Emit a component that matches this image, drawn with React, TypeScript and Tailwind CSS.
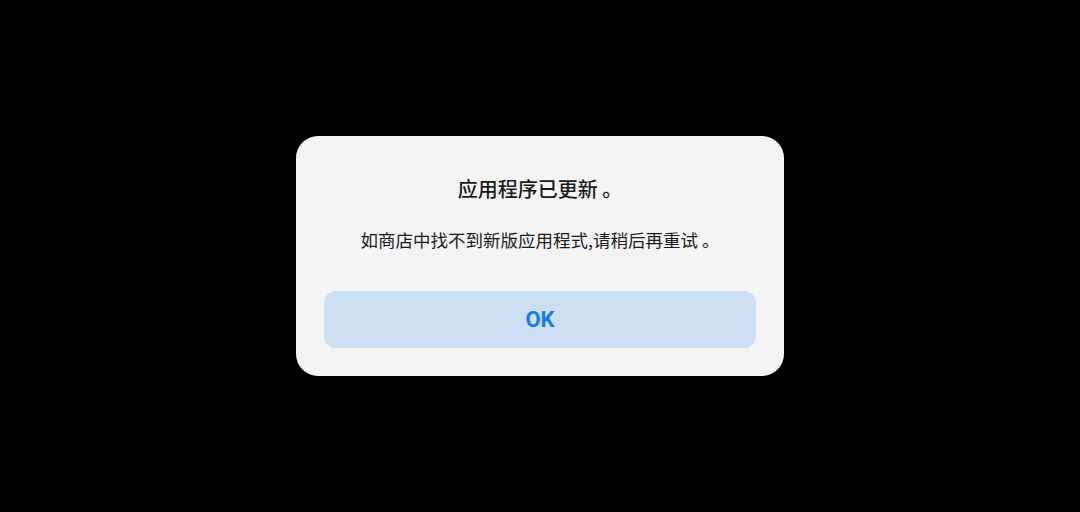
import React from 'react';

const App: React.FC = () => {
    return (
        <div
            className="w-[1080px] h-[512px] bg-black flex items-center justify-center"
            style={{ fontFamily: '"Noto Sans CJK SC", "Noto Sans", sans-serif' }}
        >
            <div className="w-[488px] h-[240px] bg-[#f4f4f4] rounded-[22px] flex flex-col items-center px-7 pt-[39px]">
                <h1 className="text-[20px] leading-[28px] font-medium text-[#1b1b1b]">应用程序已更新 。</h1>
                <p className="mt-[24px] text-[17.5px] leading-[26px] text-[#1b1b1b]">如商店中找不到新版应用程式,请稍后再重试 。</p>
                <button className="mt-[38px] w-full h-[57px] rounded-[12px] bg-[#cde0f3] text-[#1a7be6] text-[22px] font-bold font-['Roboto',sans-serif]">
                    OK
                </button>
            </div>
        </div>
    );
};

export default App;
